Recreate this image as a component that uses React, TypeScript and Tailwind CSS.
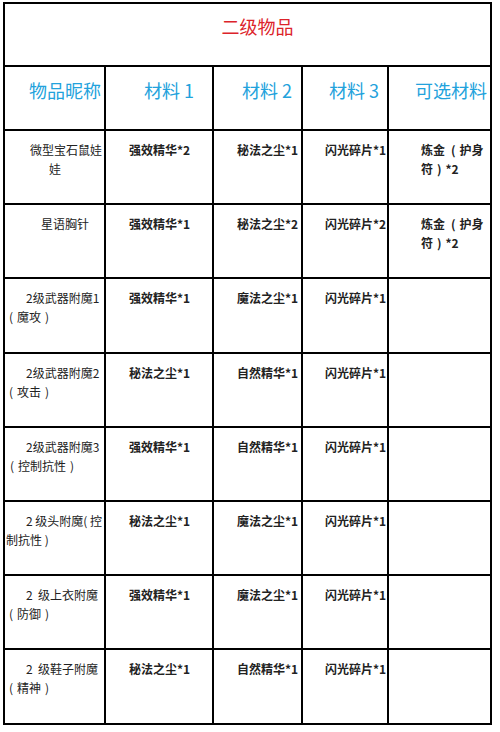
import React from "react";

type Line = { t: string; pl: string };
type Row = { name: Line[]; m1: string; m2: string; m3: string; opt: string[]; h: string };

const S = "\u2004";
const opt = [`炼金\u2002(${S}护身`, `符${S})${S}*2`];

const rows: Row[] = [
  { name: [{ t: "微型宝石鼠娃", pl: "pl-[25px]" }, { t: "娃", pl: "pl-[44px]" }], m1: "强效精华*2", m2: "秘法之尘*1", m3: "闪光碎片*1", opt, h: "h-[72px]" },
  { name: [{ t: "星语胸针", pl: "pl-[36px]" }], m1: "强效精华*1", m2: "秘法之尘*2", m3: "闪光碎片*2", opt, h: "h-[72px]" },
  { name: [{ t: "2级武器附魔1", pl: "pl-[21px]" }, { t: `(${S}魔攻${S})`, pl: "pl-[4px]" }], m1: "强效精华*1", m2: "魔法之尘*1", m3: "闪光碎片*1", opt: [], h: "h-[73px]" },
  { name: [{ t: "2级武器附魔2", pl: "pl-[21px]" }, { t: `(${S}攻击${S})`, pl: "pl-[4px]" }], m1: "秘法之尘*1", m2: "自然精华*1", m3: "闪光碎片*1", opt: [], h: "h-[72px]" },
  { name: [{ t: "2级武器附魔3", pl: "pl-[21px]" }, { t: `(${S}控制抗性${S})`, pl: "pl-[5px]" }], m1: "强效精华*1", m2: "自然精华*1", m3: "闪光碎片*1", opt: [], h: "h-[72px]" },
  { name: [{ t: "2 级头附魔( 控", pl: "pl-[21px]" }, { t: "制抗性 )", pl: "pl-[1px]" }], m1: "秘法之尘*1", m2: "魔法之尘*1", m3: "闪光碎片*1", opt: [], h: "h-[72px]" },
  { name: [{ t: "2\u00a0\u00a0级上衣附魔", pl: "pl-[21px]" }, { t: `(${S}防御${S})`, pl: "pl-[4px]" }], m1: "强效精华*1", m2: "魔法之尘*1", m3: "闪光碎片*1", opt: [], h: "h-[72px]" },
  { name: [{ t: "2\u00a0\u00a0级鞋子附魔", pl: "pl-[21px]" }, { t: `(${S}精神${S})`, pl: "pl-[4px]" }], m1: "秘法之尘*1", m2: "自然精华*1", m3: "闪光碎片*1", opt: [], h: "h-[73px]" },
];

const font = { fontFamily: '"Noto Sans CJK SC", "Noto Sans", sans-serif' };

export default function App() {
  return (
    <div className="min-h-[732px] w-[500px] bg-white pt-[2px] pl-[3px]" style={font}>
      <div className="grid w-[489px] grid-cols-[99px_106px_87px_84px_101px] gap-[2px] bg-black p-[2px]">
        <div className="col-span-5 h-[61px] bg-white pl-5 pt-[10px] text-center text-[18px] leading-[24px] text-[#dc232a]">
          二级物品
        </div>
        {[
          { t: "物品昵称", pl: "pl-[24px]" },
          { t: "材料 1", pl: "pl-[38px]" },
          { t: "材料 2", pl: "pl-[28px]" },
          { t: "材料 3", pl: "pl-[26px]" },
          { t: "可选材料", pl: "pl-[26px]" },
        ].map((h) => (
          <div
            key={h.t}
            className={`h-[62px] whitespace-nowrap bg-white pt-[11px] text-[18px] leading-[24px] text-[#22a2dc] ${h.pl}`}
          >
            {h.t}
          </div>
        ))}
        {rows.map((r, i) => (
          <React.Fragment key={i}>
            <div className={`${r.h} bg-white pt-[9px] text-[12px] leading-[19px] text-[#222]`}>
              {r.name.map((l, j) => (
                <div key={j} className={`whitespace-pre ${l.pl}`}>
                  {l.t}
                </div>
              ))}
            </div>
            <div className={`${r.h} whitespace-nowrap bg-white pl-[23px] pt-[9px] text-[12px] font-bold leading-[19px] text-[#222]`}>
              {r.m1}
            </div>
            <div className={`${r.h} whitespace-nowrap bg-white pl-[23px] pt-[9px] text-[12px] font-bold leading-[19px] text-[#222]`}>
              {r.m2}
            </div>
            <div className={`${r.h} whitespace-nowrap bg-white pl-[22px] pt-[9px] text-[12px] font-bold leading-[19px] text-[#222]`}>
              {r.m3}
            </div>
            <div className={`${r.h} bg-white pl-[32px] pt-[9px] text-[12px] font-bold leading-[19px] text-[#222]`}>
              {r.opt.map((l, j) => (
                <div key={j} className="whitespace-pre">
                  {l}
                </div>
              ))}
            </div>
          </React.Fragment>
        ))}
      </div>
    </div>
  );
}
